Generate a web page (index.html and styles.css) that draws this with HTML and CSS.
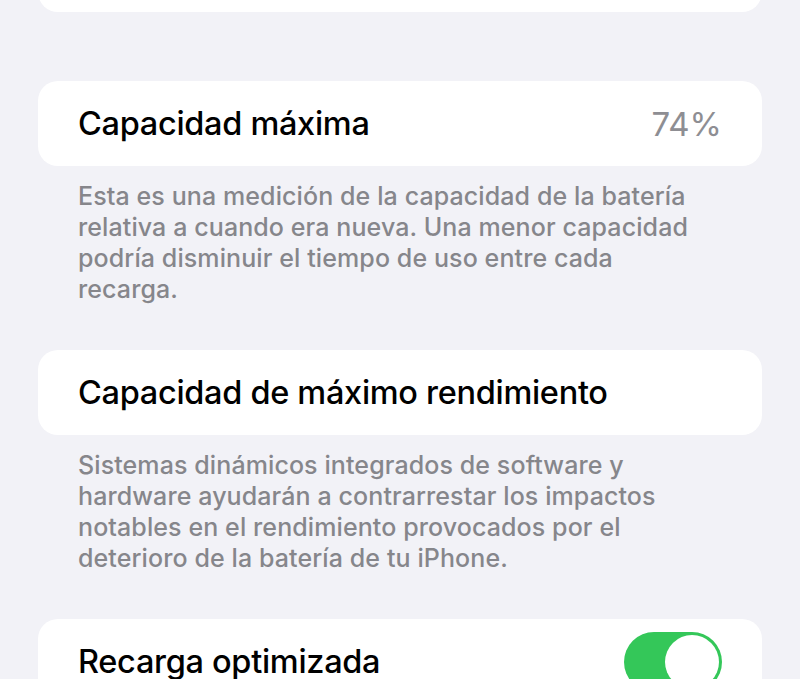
FILE: index.html
```html
<!DOCTYPE html>
<html lang="es">
<head>
  <meta charset="UTF-8">
  <meta name="viewport" content="width=device-width, initial-scale=1.0">
  <title>Estado de la batería</title>
  <link rel="stylesheet" href="styles.css">
</head>
<body>
  <div class="settings">
    <div class="card card-top"></div>

    <div class="card row first-group">
      <span class="label">Capacidad máxima</span>
      <span class="value">74%</span>
    </div>
    <p class="footer">Esta es una medición de la capacidad de la batería relativa a cuando era nueva. Una menor capacidad podría disminuir el tiempo de uso entre cada recarga.</p>

    <div class="card row">
      <span class="label">Capacidad de máximo rendimiento</span>
    </div>
    <p class="footer">Sistemas dinámicos integrados de software y hardware ayudarán a contrarrestar los impactos notables en el rendimiento provocados por el deterioro de la batería de tu iPhone.</p>

    <div class="card row">
      <span class="label">Recarga optimizada</span>
      <span class="toggle on"><span class="knob"></span></span>
    </div>
  </div>
</body>
</html>
```

FILE: styles.css
```css
body {
  margin: 0;
  background-color: #f2f2f7;
  font-family: Inter, "Noto Sans", sans-serif;
  overflow: hidden;
}
.settings {
  padding: 0 38px;
}
.card {
  background-color: #fff;
  border-radius: 20px;
  height: 85px;
}
.card-top {
  margin-top: -73px;
}
.first-group {
  margin-top: 69px;
}
.row {
  display: flex;
  align-items: center;
  justify-content: space-between;
  padding: 0 40px;
}
.label {
  font-size: 32.5px;
  font-weight: 500;
  color: #000;
  letter-spacing: -0.3px;
}
.value {
  font-size: 33px;
  font-weight: 400;
  color: #8e8e93;
}
.footer {
  margin: 0;
  padding: 15px 60px 45px 40px;
  font-size: 25px;
  font-weight: 500;
  line-height: 31px;
  letter-spacing: 0.1px;
  color: #86868b;
}
.toggle {
  width: 98px;
  height: 60px;
  border-radius: 30px;
  background-color: #34c759;
  display: flex;
  align-items: center;
  justify-content: flex-end;
  padding: 0 3px;
  box-sizing: border-box;
}
.knob {
  width: 54px;
  height: 54px;
  border-radius: 50%;
  background-color: #fff;
}
```
